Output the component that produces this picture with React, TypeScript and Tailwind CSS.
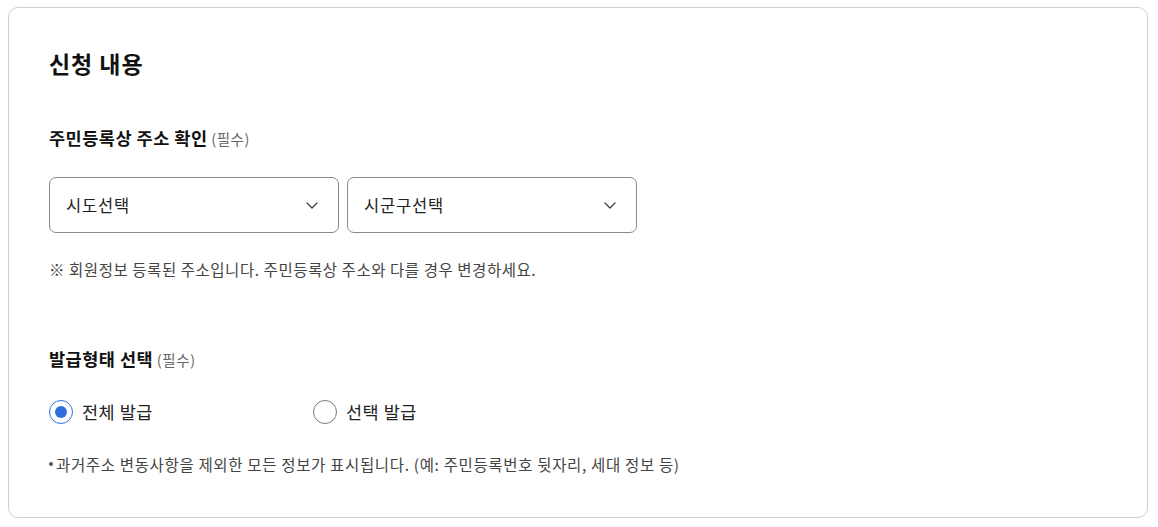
import React from "react";

const Chevron = () => (
  <svg width="12" height="7" viewBox="0 0 12 7" fill="none" className="shrink-0">
    <path d="M1 1l5 5 5-5" stroke="#3a3a3a" strokeWidth="1.2" strokeLinecap="round" strokeLinejoin="round" />
  </svg>
);

const Select = ({ label }: { label: string }) => (
  <div className="flex h-[56px] w-[290px] items-center justify-between rounded-[7px] border border-[#8a8a8a] bg-white pl-[16px] pr-[20px]">
    <span className="text-[16.5px] tracking-[0.05em] text-[#222]">{label}</span>
    <Chevron />
  </div>
);

const Radio = ({ checked, label }: { checked: boolean; label: string }) => (
  <div className="flex w-[264px] items-center gap-[9px]">
    <span
      className={
        checked
          ? "flex h-[24px] w-[24px] items-center justify-center rounded-full border-[1.5px] border-[#2f6fdc] bg-white"
          : "flex h-[24px] w-[24px] items-center justify-center rounded-full border-[1.5px] border-[#777] bg-white"
      }
    >
      {checked && <span className="h-[12px] w-[12px] rounded-full bg-[#2f6fdc]" />}
    </span>
    <span className="text-[17.5px] leading-[24px] tracking-[0.03em] text-[#222]">{label}</span>
  </div>
);

export default function App() {
  return (
    <div
      className="min-h-[527px] w-[1158px] bg-white pl-[8px] pt-[7px]"
      style={{ fontFamily: '"Noto Sans CJK KR", "Noto Sans", sans-serif' }}
    >
      <div className="flex h-[511px] w-[1140px] flex-col rounded-[10px] border border-[#cfcfcf] bg-white pl-[40px] pt-[39px]">
        <h2 className="text-[23px] font-bold leading-[32px] tracking-[0.04em] text-[#111]">신청 내용</h2>

        <div className="mt-[47px] leading-[24px]">
          <span className="text-[17.5px] font-bold tracking-[0.03em] text-[#111]">주민등록상 주소 확인</span>{" "}
          <span className="text-[14.5px] tracking-[0.04em] text-[#666]">(필수)</span>
        </div>

        <div className="mt-[26px] flex gap-[8px]">
          <Select label="시도선택" />
          <Select label="시군구선택" />
        </div>

        <p className="mt-[25px] text-[15.5px] leading-[22px] tracking-[0.035em] text-[#444]">
          ※ 회원정보 등록된 주소입니다. 주민등록상 주소와 다를 경우 변경하세요.
        </p>

        <div className="mt-[67px] leading-[24px]">
          <span className="text-[17.5px] font-bold tracking-[0.03em] text-[#111]">발급형태 선택</span>{" "}
          <span className="text-[14.5px] tracking-[0.04em] text-[#666]">(필수)</span>
        </div>

        <div className="mt-[28px] flex">
          <Radio checked label="전체 발급" />
          <Radio checked={false} label="선택 발급" />
        </div>

        <p className="mt-[29px] flex items-center text-[15.5px] leading-[22px] tracking-[0.042em] text-[#444]">
          <span className="mr-[3px] mb-[1px] h-[4px] w-[4px] shrink-0 rounded-full bg-[#555]" />
          과거주소 변동사항을 제외한 모든 정보가 표시됩니다. (예: 주민등록번호 뒷자리, 세대 정보 등)
        </p>
      </div>
    </div>
  );
}
